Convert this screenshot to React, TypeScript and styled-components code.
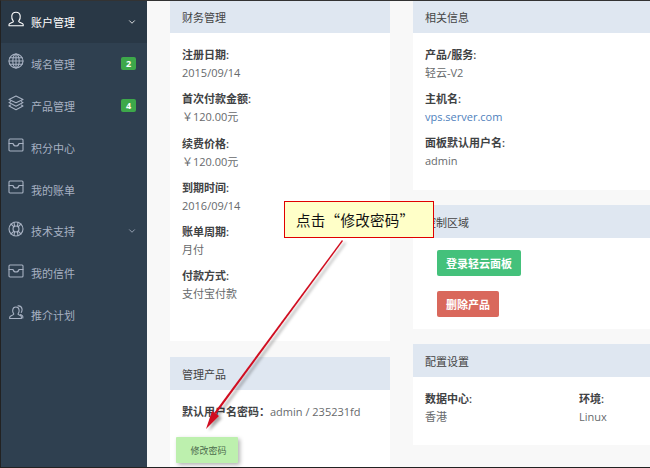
import { createGlobalStyle } from 'styled-components'
import styled from 'styled-components'
import { ChevronDown } from 'lucide-react'
import type { ReactNode } from 'react'

const GlobalStyle = createGlobalStyle`
  html, body {
    margin: 0;
    padding: 0;
    background: #f8f8f8;
  }
  body {
    font-family: "Open Sans", "Noto Sans CJK SC", sans-serif;
    font-size: 11px;
    color: #676a6c;
  }
`

const Frame = styled.div`
  position: relative;
  box-sizing: border-box;
  width: 650px;
  height: 468px;
  overflow: hidden;
  display: flex;
  border-top: 1px solid #333;
  border-bottom: 1px solid #222;
  border-left: 1px solid #222;
  background: #f8f8f8;
`

const Sidebar = styled.nav`
  flex: 0 0 146px;
  background: #2f4050;
`

const NavItem = styled.div<{ $active?: boolean }>`
  box-sizing: border-box;
  height: 41.9px;
  display: flex;
  align-items: center;
  padding: 0 10px 0 7px;
  background: ${(p) => (p.$active ? '#293846' : 'transparent')};
  color: ${(p) => (p.$active ? '#fff' : '#a7b1c2')};
  font-size: 11px;
`

const NavIcon = styled.svg`
  width: 16px;
  height: 16px;
  margin-top: -5px;
  margin-right: 7px;
  fill: none;
  stroke: currentColor;
  stroke-width: 1.1;
  stroke-linejoin: round;
  stroke-linecap: round;
`

const NavLabel = styled.span`
  flex: 1;
`

const Badge = styled.span`
  width: 15px;
  height: 13px;
  border-radius: 2px;
  background: #3da84a;
  color: #fff;
  font-size: 9px;
  font-weight: 700;
  line-height: 13px;
  text-align: center;
  margin-right: 1px;
`

const Main = styled.main`
  flex: 1;
  display: flex;
  gap: 23px;
  margin-top: -1px;
  padding-left: 23px;
  min-width: 0;
`

const Column = styled.div<{ $width: number; $gap: number }>`
  flex: 0 0 ${(p) => p.$width}px;
  display: flex;
  flex-direction: column;
  gap: ${(p) => p.$gap}px;
`

const Card = styled.section<{ $height: number }>`
  flex: 0 0 ${(p) => p.$height}px;
  min-height: 0;
  display: flex;
  flex-direction: column;
  background: #fff;
`

const CardHeader = styled.h3`
  margin: 0;
  flex: 0 0 33px;
  padding-left: 12px;
  display: flex;
  align-items: center;
  background: #dfe7f1;
  color: #444;
  font-size: 11px;
  font-weight: 400;
`

const CardBody = styled.div`
  padding: 13px 12px 0;
`

const Field = styled.div`
  margin-bottom: 8px;
`

const Label = styled.div`
  color: #3f4244;
  font-weight: 600;
  line-height: 18px;
`

const Value = styled.div`
  line-height: 18.3px;
`

const Link = styled.a`
  display: block;
  color: #4f81bd;
  line-height: 18px;
`

const Credentials = styled.div`
  line-height: 18px;
`

const CredentialsLabel = styled.span`
  color: #3f4244;
  font-weight: 600;
`

const Buttons = styled.div`
  display: flex;
  flex-direction: column;
  align-items: flex-start;
  gap: 15px;
  padding: 12px 24px;
`

const Button = styled.button<{ $bg: string }>`
  height: 26px;
  padding: 0 9px;
  border: none;
  border-radius: 2px;
  background: ${(p) => p.$bg};
  color: #fff;
  font-family: inherit;
  font-size: 11px;
  font-weight: 700;
`

const ChangeButton = styled.button`
  display: block;
  margin: 16px 0 0 -6px;
  padding: 0 0 0 3px;
  width: 62px;
  height: 26px;
  border: none;
  border-radius: 1px;
  background: #bdf0ae;
  color: #4b6a4b;
  font-family: inherit;
  font-size: 9px;
  box-shadow: 2px 2px 4px rgba(0, 0, 0, 0.3);
`

const TwoCols = styled.div`
  display: grid;
  grid-template-columns: 154px 1fr;
`

const Callout = styled.div`
  position: absolute;
  left: 283px;
  top: 200px;
  box-sizing: border-box;
  width: 150px;
  height: 37px;
  padding-left: 11px;
  display: flex;
  align-items: center;
  background: #ffffc8;
  border: 1px solid #e00000;
  color: #111;
  font-family: "Noto Sans CJK SC", sans-serif;
  font-size: 14.5px;
  letter-spacing: 0.3px;
`

const ArrowLayer = styled.svg`
  position: absolute;
  left: -1px;
  top: -1px;
  pointer-events: none;
`

const UserIcon = (
  <path d="M5 9.6C3.9 8.3 3.6 6.6 3.8 4.9 4.1 2.7 5.8 1.3 8 1.3s3.9 1.4 4.2 3.6c.2 1.7-.1 3.4-1.2 4.7-.4.5-.3 1 .2 1.3l3.1 1.5c.6.3.9.7.9 1.3v1.1H1v-1.1c0-.6.3-1 .9-1.3L5 11c.5-.3.4-.9 0-1.4z" />
)
const GlobeIcon = (
  <>
    <circle cx="8" cy="8" r="7" />
    <ellipse cx="8" cy="8" rx="3.2" ry="7" />
    <path d="M8 1v14M1.8 4.8h12.4M1 8h14M1.8 11.2h12.4" />
  </>
)
const LayersIcon = (
  <>
    <path d="M8 1l7 3.4-7 3.4-7-3.4z" />
    <path d="M2.6 6.6L1 7.6l7 3.6 7-3.6-1.6-1" />
    <path d="M2.6 10L1 11l7 3.8 7-3.8-1.6-1" />
  </>
)
const TrayIcon = (
  <>
    <rect x="1" y="2" width="14" height="12" rx="1" />
    <path d="M1 6.5h4c.4 1.6 1.5 2.5 3 2.5s2.6-.9 3-2.5h4" />
  </>
)
const BuoyIcon = (
  <>
    <circle cx="8" cy="8" r="7" />
    <circle cx="8" cy="8" r="3" />
    <path d="M3 3l2.9 2.9M13 3l-2.9 2.9M3 13l2.9-2.9M13 13l-2.9-2.9M6 1.3l.6 4M10 1.3l-.6 4M6 14.7l.6-4M10 14.7l-.6-4" />
  </>
)
const PeopleIcon = (
  <>
    <path d="M5.6 8.6C4.8 7.6 4.5 6.4 4.7 5c.2-1.9 1.5-3 3.2-3s3 1.1 3.2 3c.2 1.4-.1 2.6-.9 3.6-.3.4-.2.8.2 1l2.3 1.2c.5.3.7.6.7 1.1v1.6H1.7v-1.1c0-.5.2-.8.7-1.1l2.9-1.7c.4-.2.6-.6.3-1z" />
    <path d="M10 .9c2-.2 3.7 1 4 3 .2 1.4 0 2.5-.7 3.5M12.6 9.6l1.4.8c.5.3.8.6.8 1.1V13" />
  </>
)

interface NavEntry {
  label: string
  icon: ReactNode
  active?: boolean
  chevron?: boolean
  badge?: string
}

const nav: NavEntry[] = [
  { label: '账户管理', icon: UserIcon, active: true, chevron: true },
  { label: '域名管理', icon: GlobeIcon, badge: '2' },
  { label: '产品管理', icon: LayersIcon, badge: '4' },
  { label: '积分中心', icon: TrayIcon },
  { label: '我的账单', icon: TrayIcon },
  { label: '技术支持', icon: BuoyIcon, chevron: true },
  { label: '我的信件', icon: TrayIcon },
  { label: '推介计划', icon: PeopleIcon },
]

const billing = [
  ['注册日期:', '2015/09/14'],
  ['首次付款金额:', '￥120.00元'],
  ['续费价格:', '￥120.00元'],
  ['到期时间:', '2016/09/14'],
  ['账单周期:', '月付'],
  ['付款方式:', '支付宝付款'],
]

export default function App() {
  return (
    <Frame>
      <GlobalStyle />
      <Sidebar>
        {nav.map((item) => (
          <NavItem key={item.label} $active={item.active}>
            <NavIcon viewBox="0 0 16 16">{item.icon}</NavIcon>
            <NavLabel>{item.label}</NavLabel>
            {item.badge && <Badge>{item.badge}</Badge>}
            {item.chevron && <ChevronDown size={10} strokeWidth={2} />}
          </NavItem>
        ))}
      </Sidebar>
      <Main>
        <Column $width={220} $gap={16}>
          <Card $height={341}>
            <CardHeader>财务管理</CardHeader>
            <CardBody>
              {billing.map(([label, value]) => (
                <Field key={label}>
                  <Label>{label}</Label>
                  <Value>{value}</Value>
                </Field>
              ))}
            </CardBody>
          </Card>
          <Card $height={120}>
            <CardHeader>管理产品</CardHeader>
            <CardBody>
              <Credentials>
                <CredentialsLabel>默认用户名密码：</CredentialsLabel>admin / 235231fd
              </Credentials>
              <ChangeButton>修改密码</ChangeButton>
            </CardBody>
          </Card>
        </Column>
        <Column $width={240} $gap={15}>
          <Card $height={190}>
            <CardHeader>相关信息</CardHeader>
            <CardBody>
              <Field>
                <Label>产品/服务:</Label>
                <Value>轻云-V2</Value>
              </Field>
              <Field>
                <Label>主机名:</Label>
                <Link>vps.server.com</Link>
              </Field>
              <Field>
                <Label>面板默认用户名:</Label>
                <Value>admin</Value>
              </Field>
            </CardBody>
          </Card>
          <Card $height={124}>
            <CardHeader>控制区域</CardHeader>
            <Buttons>
              <Button $bg="#44c17b">登录轻云面板</Button>
              <Button $bg="#d9685c">删除产品</Button>
            </Buttons>
          </Card>
          <Card $height={101}>
            <CardHeader>配置设置</CardHeader>
            <CardBody>
              <TwoCols>
                <div>
                  <Label>数据中心:</Label>
                  <Value>香港</Value>
                </div>
                <div>
                  <Label>环境:</Label>
                  <Value>Linux</Value>
                </div>
              </TwoCols>
            </CardBody>
          </Card>
        </Column>
      </Main>
      <ArrowLayer width="650" height="468" viewBox="0 0 650 468">
        <defs>
          <filter id="arrow-shadow" x="-20%" y="-20%" width="140%" height="140%">
            <feDropShadow dx="3" dy="2" stdDeviation="1.5" floodColor="#000" floodOpacity="0.35" />
          </filter>
        </defs>
        <g filter="url(#arrow-shadow)">
          <polygon points="342,240 343,241 216,414 214,413" fill="#d01020" />
          <polygon points="206,429 212,411 219,416" fill="#d01020" />
        </g>
      </ArrowLayer>
      <Callout>点击“修改密码”</Callout>
    </Frame>
  )
}
